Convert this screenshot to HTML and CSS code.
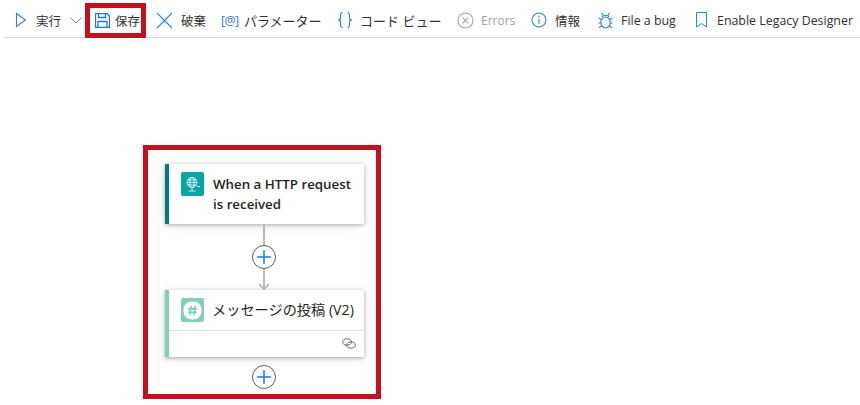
FILE: index.html
```html
<!DOCTYPE html>
<html lang="ja">
<head>
<meta charset="utf-8">
<title>Logic App Designer</title>
<link rel="stylesheet" href="styles.css">
</head>
<body>
<header class="toolbar">
  <div class="tool w-run"><svg class="ic" width="12" height="16" viewBox="0 0 12 16"><path d="M1.500 1.500 L10.500 8 L1.500 14.500 Z" fill="none" stroke="#3b79d8" stroke-width="1.100"/></svg><span class="label">実行</span></div>
  <div class="tool w-chev"><svg width="12" height="7" viewBox="0 0 12 7"><path d="M.5.5 L6 6 L11.500.5" fill="none" stroke="#8a8886" stroke-width="1"/></svg></div>
  <div class="tool w-save"><svg class="ic" width="15" height="15" viewBox="0 0 15 15"><path d="M.5.5H12L14.500 3V14.500H.5Z M3.500.5V4.500H10.500V.5 M3 14.500V8.500H12V14.500" fill="none" stroke="#1f78e0" stroke-width="1.300"/></svg><span class="label">保存</span></div>
  <div class="tool w-discard"><svg class="ic" width="17" height="17" viewBox="0 0 17 17"><path d="M1 1 L16 16 M16 1 L1 16" stroke="#2b88d8" stroke-width="1.100"/></svg><span class="label">破棄</span></div>
  <div class="tool w-param"><span class="at">[@]</span><span class="label big">パラメーター</span></div>
  <div class="tool w-code"><svg class="ic" width="16" height="16" viewBox="0 0 16 16"><path d="M5.500.5C3.500.5 3.500 1.500 3.500 3V6C3.500 7 2.800 8 1 8C2.800 8 3.500 9 3.500 10V13C3.500 14.500 3.500 15.500 5.500 15.500M10.500.5C12.500.5 12.500 1.500 12.500 3V6C12.500 7 13.200 8 15 8C13.200 8 12.500 9 12.500 10V13C12.500 14.500 12.500 15.500 10.500 15.500" fill="none" stroke="#2b7cd8" stroke-width="1.100"/></svg><span class="label big">コード ビュー</span></div>
  <div class="tool w-err"><svg class="ic" width="17" height="17" viewBox="0 0 17 17"><circle cx="8.500" cy="8.500" r="7.500" fill="none" stroke="#a6a6a6" stroke-width="1.100"/><path d="M5.700 5.700 L11.300 11.300 M11.300 5.700 L5.700 11.300" stroke="#a6a6a6" stroke-width="1.100"/></svg><span class="label off">Errors</span></div>
  <div class="tool w-info"><svg class="ic" width="16" height="16" viewBox="0 0 16 16"><circle cx="8" cy="8" r="7" fill="none" stroke="#2b88d8" stroke-width="1.100"/><path d="M8 7V12" stroke="#2b88d8" stroke-width="1.100"/><circle cx="8" cy="4.800" r=".8" fill="#2b88d8"/></svg><span class="label">情報</span></div>
  <div class="tool w-bug"><svg class="ic" width="15" height="17" viewBox="0 0 15 17"><g fill="none" stroke="#2b7cd8" stroke-width="1.100"><ellipse cx="7.500" cy="10.500" rx="4.700" ry="5.500"/><path d="M4.300 5C4.300 2.600 10.700 2.600 10.700 5M5 3L3.500.8M10 3L11.500.8M3.200 7.500L.8 6M11.800 7.500L14.200 6M2.800 11H.5M12.200 11H14.500M3.500 14L1.200 15.800M11.500 14L13.800 15.800"/></g></svg><span class="label wide">File a bug</span></div>
  <div class="tool w-legacy"><svg class="ic" width="11" height="16" viewBox="0 0 11 16"><path d="M.5.5H10.500V15L5.500 11.500L.5 15Z" fill="none" stroke="#2b88d8" stroke-width="1"/></svg><span class="label wide">Enable Legacy Designer</span></div>
</header>
<div class="save-mark"></div>
<main class="canvas">
  <section class="frame">
    <article class="card card-http">
      <div class="card-head">
        <div class="badge badge-http"><svg width="16" height="17" viewBox="0 0 16 17"><g fill="none" stroke="#fff" stroke-width=".8"><circle cx="7" cy="6.500" r="5"/><ellipse cx="7" cy="6.500" rx="2.200" ry="5"/><path d="M2 6.500H12M2.800 4H11.200M2.800 9H11.200M7 11.500V15M3.500 15H10.500M12 10.500H15"/></g></svg></div>
        <div class="title">When a HTTP request is received</div>
      </div>
    </article>
    <div class="line l-a"></div>
    <div class="plus"><svg width="14" height="14" viewBox="0 0 14 14"><path d="M7 0V14M0 7H14" stroke="#0f7fd8" stroke-width="1.500"/></svg></div>
    <div class="line l-b"></div>
    <svg class="arrow" width="12" height="7" viewBox="0 0 12 7"><path d="M.8.8 L6 6 L11.200.8" fill="none" stroke="#b8b8b8" stroke-width="1.600"/></svg>
    <article class="card card-slack">
      <div class="card-head head-slack">
        <div class="badge badge-slack"><svg width="19" height="19" viewBox="0 0 19 19"><path d="M9.500 .5C15 .5 18.500 3.500 18.500 9.500S15 18.500 9.500 18.500 .5 15.500 .5 9.500 4 .5 9.500 .5Z" fill="#fff"/><path d="M8 5L7 14M12 5L11 14M5 7.800H14M4.800 11.300H13.800" stroke="#7fd1b3" stroke-width="1.800"/></svg></div>
        <div class="title">メッセージの投稿 (V2)</div>
      </div>
      <div class="card-foot"><svg width="14" height="11" viewBox="0 0 14 11"><g fill="none" stroke="#605e5c" stroke-width=".9"><ellipse cx="5" cy="4" rx="4.300" ry="3.100"/><ellipse cx="9" cy="7" rx="4.300" ry="3.100"/></g></svg></div>
    </article>
    <div class="plus plus-end"><svg width="14" height="14" viewBox="0 0 14 14"><path d="M7 0V14M0 7H14" stroke="#0f7fd8" stroke-width="1.500"/></svg></div>
  </section>
</main>
</body>
</html>
```
FILE: styles.css
```css
* { box-sizing: border-box; }
html, body { margin: 0; padding: 0; background: #fff; }
body {
  width: 860px;
  height: 405px;
  overflow: hidden;
  position: relative;
  font-family: "Open Sans", "Noto Sans CJK JP", sans-serif;
  color: #323130;
}
.toolbar {
  display: flex;
  align-items: flex-start;
  height: 38px;
  margin-left: 4px;
  padding: 2px 0 0 11px;
  border-bottom: 1px solid #d9d9d9;
  white-space: nowrap;
}
.tool { display: flex; align-items: center; flex: none; height: 36px; }
.label { font-size: 12.5px; }
.label.big { font-size: 13px; }
.label.wide { font-size: 12.4px; }
.label.off { font-size: 12px; color: #a19f9d; }
.w-run { width: 55px; }
.w-run .ic { margin-right: 9px; }
.w-chev { width: 25px; }
.w-save { width: 61px; }
.w-save .ic { margin-right: 5px; }
.w-discard { width: 65px; }
.w-discard .ic { margin-right: 8px; }
.w-param { width: 116px; }
.w-code { width: 120px; }
.w-code .ic { margin-right: 7px; }
.w-err { width: 74px; }
.w-err .ic { margin-right: 7px; }
.w-info { width: 67px; }
.w-info .ic { margin-right: 8px; }
.w-bug { width: 98px; }
.w-bug .ic { margin-right: 8px; }
.w-legacy .ic { margin-right: 10px; }
.at { color: #2b7cd8; font-size: 12.5px; letter-spacing: -.6px; width: 23px; }
.save-mark {
  position: absolute;
  left: 85px;
  top: 3px;
  width: 61px;
  height: 35px;
  border: 5px solid #c50f1f;
}
.canvas { padding: 107px 0 0 143px; }
.frame {
  width: 238px;
  height: 254px;
  border: 5px solid #c50f1f;
  padding: 14px 0 0 17px;
  display: flex;
  flex-direction: column;
  align-items: flex-start;
}
.card {
  width: 199px;
  background: #fff;
  box-shadow: 0 1px 4px rgba(0,0,0,.3), 0 2px 12px rgba(0,0,0,.08);
  flex: none;
}
.card-http { height: 60px; border-left: 4px solid #007c85; }
.card-slack { height: 67px; border-left: 4px solid #7fd1b3; }
.card-head { display: flex; padding: 8px 0 0 12px; }
.head-slack { height: 41px; border-bottom: 1px solid #dedede; }
.badge {
  width: 23px;
  height: 24px;
  border-radius: 2px;
  display: flex;
  align-items: center;
  justify-content: center;
  flex: none;
}
.badge-http { background: #0aa5a8; }
.badge-slack { background: #7fd1b3; }
.title {
  margin-left: 9px;
  width: 145px;
  font-size: 13.3px;
  line-height: 20px;
  font-weight: 600;
  color: #252423;
  padding-top: 2px;
}
.head-slack .title { margin-left: 8px; font-weight: 400; font-size: 14.2px; width: 155px; white-space: nowrap; }
.card-foot { display: flex; justify-content: flex-end; padding: 7px 8px 0 0; }
.line { width: 2px; background: #b8b8b8; margin-left: 98px; flex: none; }
.l-a { height: 21px; }
.l-b { height: 20px; }
.arrow { margin-left: 93px; margin-top: -6px; flex: none; }
.plus {
  width: 24px;
  height: 24px;
  margin-left: 87px;
  border: 1px solid #605e5c;
  border-radius: 50%;
  background: #fff;
  display: flex;
  align-items: center;
  justify-content: center;
  flex: none;
}
.plus-end { margin-top: 8px; }
```
